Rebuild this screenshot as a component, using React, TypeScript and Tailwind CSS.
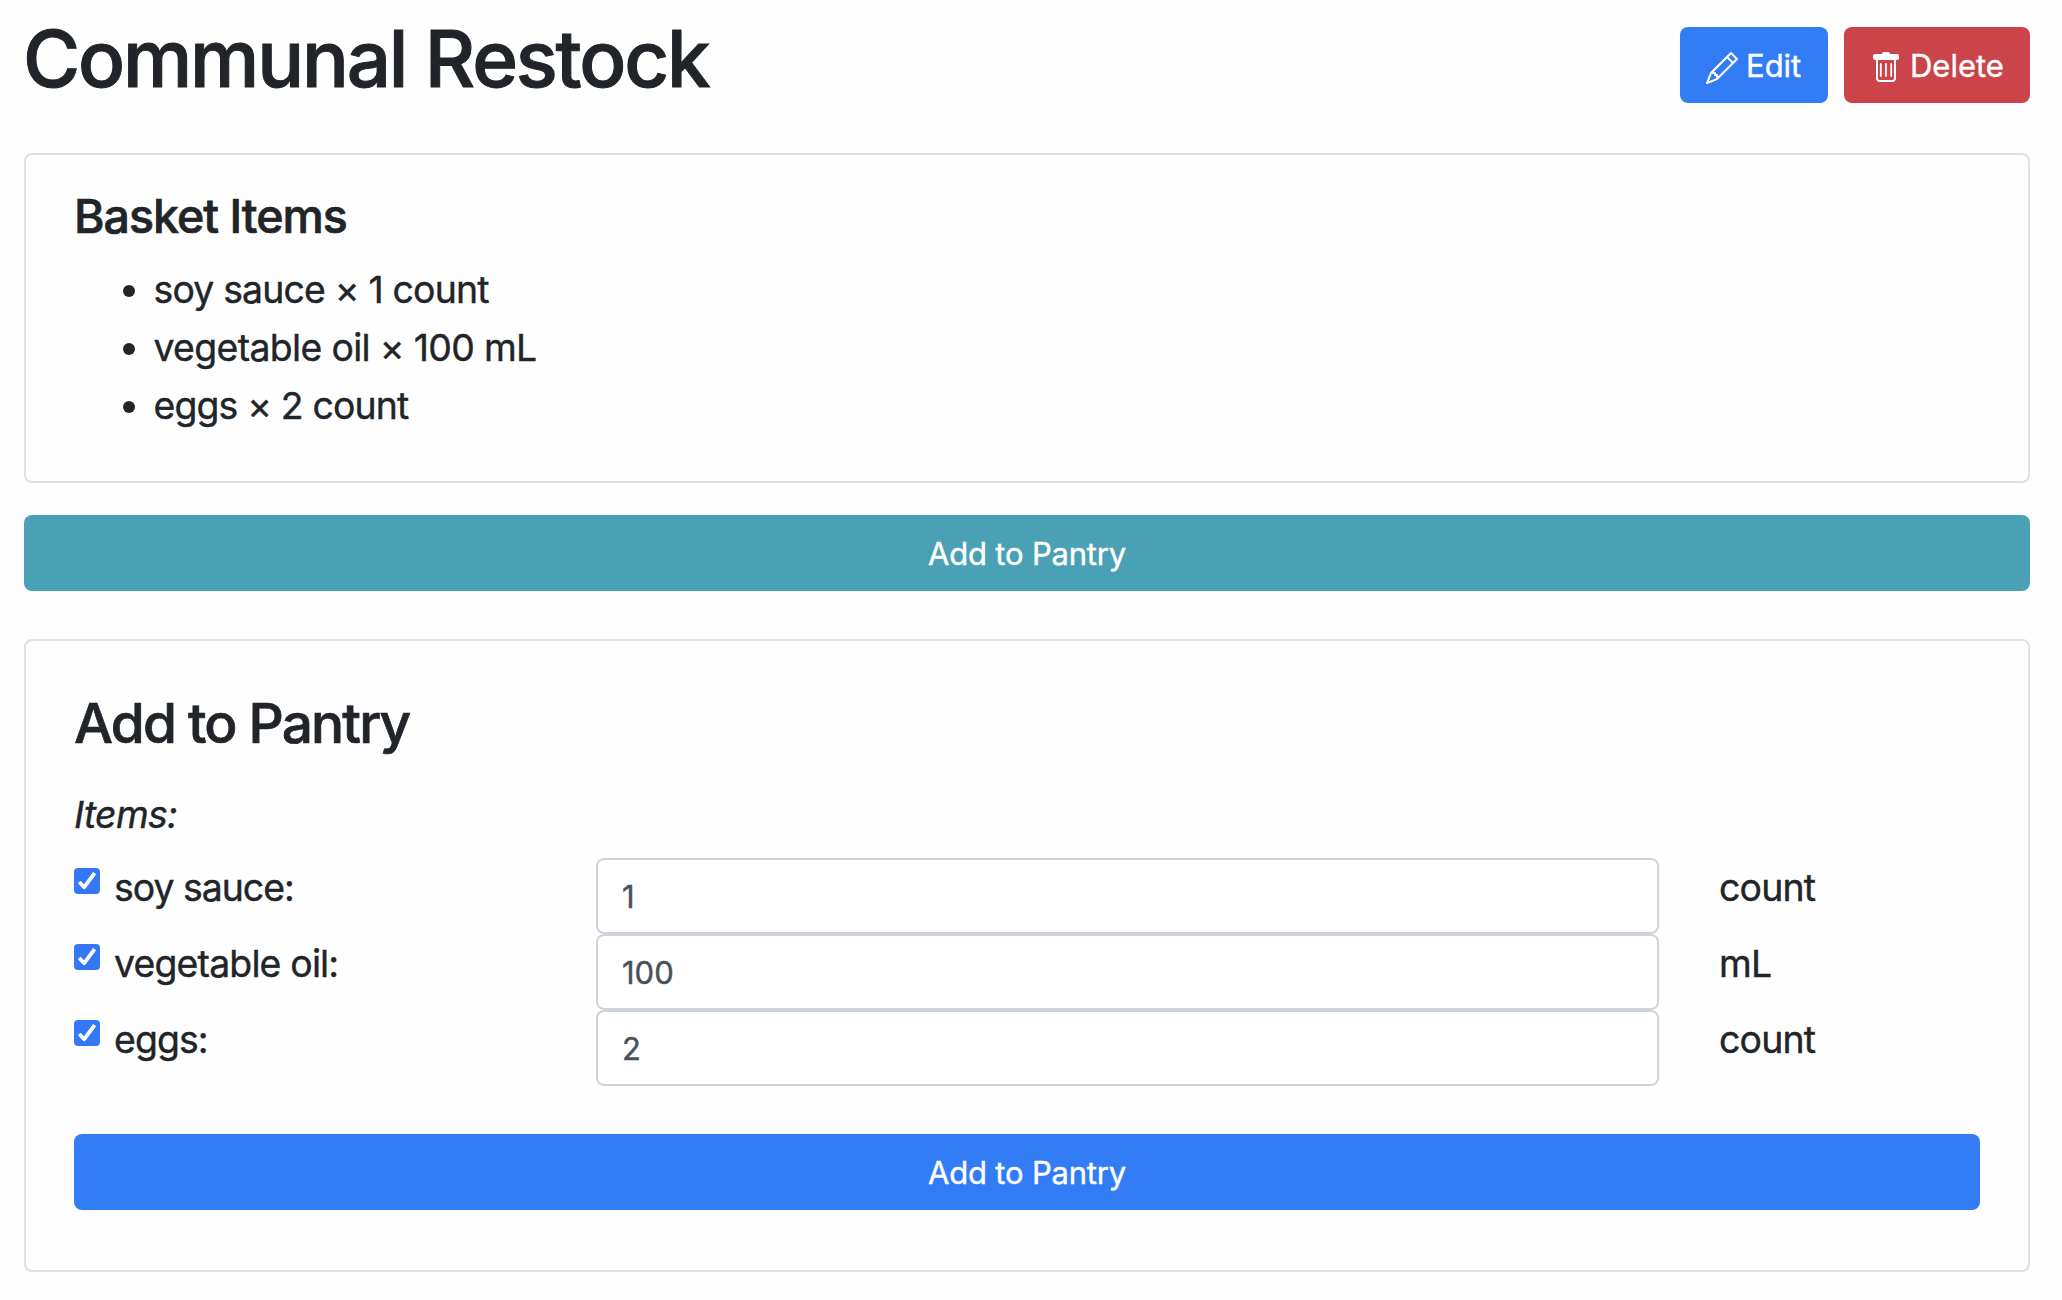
import { useState } from "react";

const items = [
  { name: "soy sauce", amount: "1", unit: "count", tracking: "tracking-[-0.82px]", label: "tracking-[-1px]" },
  { name: "vegetable oil", amount: "100", unit: "mL", tracking: "tracking-[-0.66px]", label: "tracking-[-0.82px]" },
  { name: "eggs", amount: "2", unit: "count", tracking: "tracking-[-0.85px]", label: "tracking-[-0.9px]" },
];

function Pencil() {
  return (
    <svg className="mt-[6px] size-8" viewBox="0 0 16 16" fill="currentColor">
      <path d="M12.146.146a.5.5 0 0 1 .708 0l3 3a.5.5 0 0 1 0 .708l-10 10a.5.5 0 0 1-.168.11l-5 2a.5.5 0 0 1-.65-.65l2-5a.5.5 0 0 1 .11-.168l10-10zM11.207 2.5 13.5 4.793 14.793 3.5 12.5 1.207 11.207 2.5zm1.586 3L10.5 3.207 4 9.707V10h.5a.5.5 0 0 1 .5.5v.5h.5a.5.5 0 0 1 .5.5v.5h.293l6.5-6.5zm-9.761 5.175-.106.106-1.528 3.821 3.821-1.528.106-.106A.5.5 0 0 1 5 12.5V12h-.5a.5.5 0 0 1-.5-.5V11h-.5a.5.5 0 0 1-.468-.325z" />
    </svg>
  );
}

function Trash() {
  return (
    <svg className="mt-[6px] size-8" viewBox="0 0 16 16" fill="none" stroke="currentColor">
      <path d="M3.5 3.5v9.600a1.4 1.4 0 0 0 1.4 1.4h6.200a1.4 1.4 0 0 0 1.4-1.4V3.5" />
      <path d="M5.400 6v6M8 6v6M10.600 6v6" strokeWidth="0.9" strokeLinecap="round" />
      <path fill="currentColor" stroke="none" d="M2.500 1a1 1 0 0 0-1 1v1a1 1 0 0 0 1 1h11a1 1 0 0 0 1-1V2a1 1 0 0 0-1-1H10a1 1 0 0 0-1-1H7a1 1 0 0 0-1 1z" />
    </svg>
  );
}

function Check({ label }: { label: string }) {
  const [on, setOn] = useState(true);
  return (
    <button
      role="checkbox"
      aria-checked={on}
      aria-label={label}
      onClick={() => setOn(!on)}
      className="mt-[10px] size-[26px] shrink-0 rounded-[4px] bg-[#3478f6]"
    >
      {on && (
        <svg viewBox="0 0 26 26" className="size-[26px]" fill="none" stroke="white" strokeWidth="3.8" strokeLinejoin="round">
          <path d="M5.200 14 10.200 19.200 20.600 5.200" />
        </svg>
      )}
    </button>
  );
}

export default function App() {
  return (
    <main className="h-[1300px] w-[2062px] bg-[#fefefe] pl-6 pr-8 pt-[27px] font-['Inter',sans-serif] text-[37.4px] leading-[58px] text-[#212529] [-webkit-text-stroke-width:0.4px]">
      <header className="flex h-[126px] items-start justify-between">
        <h1 className="-ml-px -mt-[16px] text-[78px] font-medium leading-[96px] tracking-[-2.18px] [-webkit-text-stroke-width:1px]">Communal Restock</h1>
        <div className="flex gap-4 text-[31px] leading-none text-white">
          <button className="flex h-[76px] w-[148px] items-center rounded-lg bg-[#327cf6] pl-[26px]">
            <Pencil />
            <span className="ml-2">Edit</span>
          </button>
          <button className="flex h-[76px] w-[186px] items-center rounded-lg bg-[#ca444a] pl-[26px]">
            <Trash />
            <span className="ml-2">Delete</span>
          </button>
        </div>
      </header>

      <section className="h-[330px] rounded-lg border-2 border-[#dee2e6] px-12 pt-[32px]">
        <h2 className="text-[46.500px] font-medium leading-[58px] tracking-[-1px] [-webkit-text-stroke-width:0.7px]">Basket Items</h2>
        <ul className="mt-[16px] pl-[32px]">
          {items.map((item) => (
            <li key={item.name} className="flex h-[58px] items-center">
              <span className="ml-[17px] mr-[18.500px] mt-px size-3 rounded-full bg-[#212529]" />
              <span className={item.tracking}>
                {item.name} × {item.amount} {item.unit}
              </span>
            </li>
          ))}
        </ul>
      </section>

      <button className="mt-8 block h-[76px] w-full rounded-lg bg-[#4aa0b5] pt-px text-[31px] leading-[76px] tracking-[-0.2px] text-white">
        Add to Pantry
      </button>

      <section className="mt-12 h-[633px] rounded-lg border-2 border-[#dee2e6] px-12 pt-[47px]">
        <h2 className="text-[55px] font-medium leading-[70px] tracking-[-1.83px] [-webkit-text-stroke-width:0.7px]">Add to Pantry</h2>
        <p className="mt-[28px] italic tracking-[-0.7px]">Items:</p>
        <div className="mt-[14px]">
          {items.map((item) => (
            <div key={item.name} className="flex h-[76px] items-start">
              <div className="flex w-[522px] items-start">
                <Check label={item.name} />
                <span className={"ml-[14px] pt-px " + item.label}>{item.name}:</span>
              </div>
              <input
                defaultValue={item.amount}
                aria-label={item.name + " amount"}
                className="h-[76px] w-[1063px] rounded-lg border-2 border-[#ced4da] bg-white px-6 text-[31px] text-[#495057] outline-none"
              />
              <span className="ml-[60px] pt-px tracking-[-0.8px]">{item.unit}</span>
            </div>
          ))}
        </div>
        <button className="mt-12 block h-[76px] w-full rounded-lg bg-[#327cf6] pt-px text-[31px] leading-[76px] tracking-[-0.2px] text-white">
          Add to Pantry
        </button>
      </section>
    </main>
  );
}
